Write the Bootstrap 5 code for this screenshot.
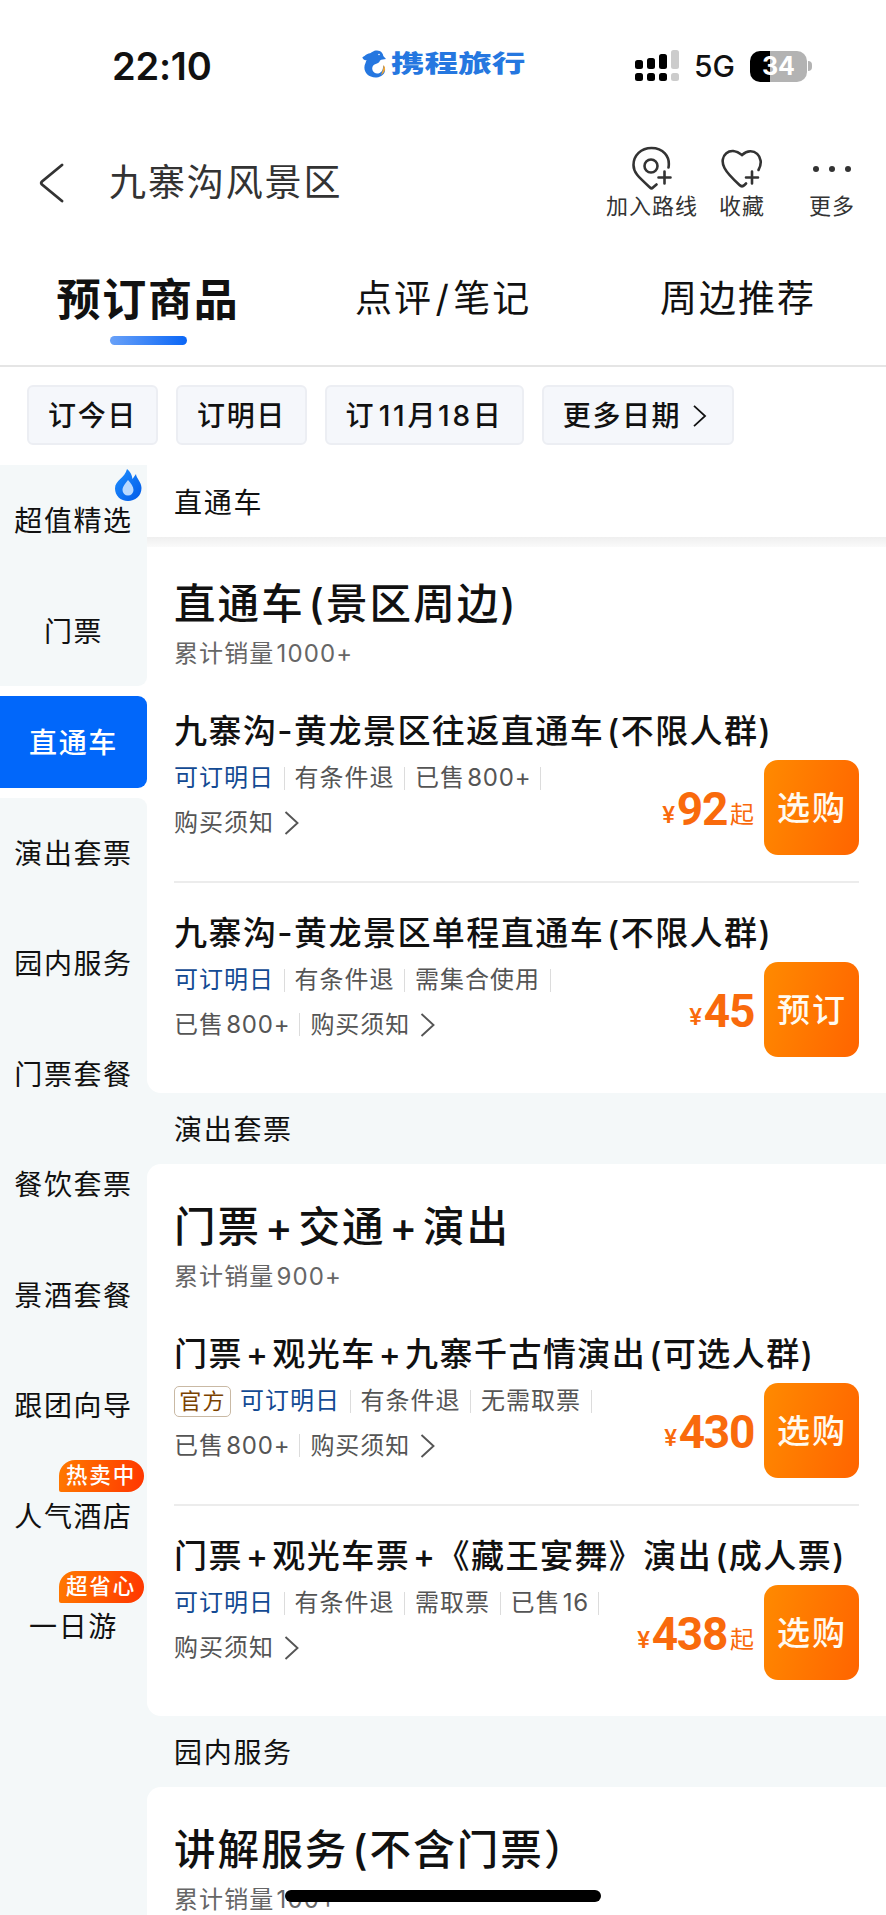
<!DOCTYPE html>
<html lang="zh-CN">
<head>
<meta charset="utf-8">
<meta name="viewport" content="width=device-width, initial-scale=1">
<title>九寨沟风景区</title>
<link href="https://cdn.jsdelivr.net/npm/bootstrap@5.3.0/dist/css/bootstrap.min.css" rel="stylesheet">
<style>
:root{--ink:#111;--soft:#555;--pane:#f4f8f9;--blue:#0167fa}
body{font-family:Inter,"Noto Sans CJK SC",sans-serif;color:var(--ink);background:#fff;line-height:1}
svg{display:block;flex:none}
.lat{margin-left:.09em}
/* status bar */
.status{height:132px;padding:0 74px 0 112px}
.clock{font-size:38px;font-weight:600;width:250px;letter-spacing:-.2px}
.brand{margin-bottom:5px}
.brandword{font-size:24px;font-weight:900;color:#2577e0;transform:scaleX(1.4);transform-origin:0 50%;width:135px;white-space:nowrap}
.net{font-size:30px;font-weight:500;margin:0 15px 0 15px}
.batt{width:57px;height:31px;border-radius:10px;background:linear-gradient(90deg,#000 20px,#b3b3b3 20px);color:#fff;font-weight:700;font-size:25px}
.nub{width:4px;height:10px;border-radius:0 5px 5px 0;background:#b3b3b3;margin-left:1px}
/* title bar */
.topbar{height:101px;padding:0 31px 0 39px;color:#333}
.place{font-size:37px;letter-spacing:1.9px;margin-left:45px}
.tool{font-size:22px;letter-spacing:1px;height:71px;white-space:nowrap;margin-top:-2px}
/* tabs */
.tabs{height:134px;border-bottom:2px solid #e5e5e5;font-size:37px;letter-spacing:2px}
.tabs>div{white-space:nowrap}
.tab-on{font-size:44px;font-weight:700;letter-spacing:1.8px}
.tab-line{width:77px;height:9px;border-radius:5px;background:linear-gradient(90deg,#69a1f8,#0a66f6)}
.slash{margin:0 2.5px}
/* dates */
.dates{height:98px;padding:18px 27px 0;gap:18px}
.chip{height:60px;padding-top:1px;border:2px solid #eceef3;border-radius:6px;background:#f5f7fb;font-size:28px;letter-spacing:1.6px;font-weight:500;white-space:nowrap}
/* sidebar */
.page-body{height:1450px}
.side{width:147px;flex:none;background:var(--pane);font-size:28px;letter-spacing:1.6px}
.side .cell{height:110.5px;background:var(--pane);position:relative;padding-top:2px}
.side .hole{height:111.5px;padding:9.5px 0;background:#fff}
.side .wrap{background:#fff}
.side .on{height:92.5px;padding-top:2px;background:var(--blue);color:#fff;font-weight:500;border-radius:0 9px 9px 0}
.tagpill{position:absolute;right:3.5px;top:-.5px;width:85px;height:32px;border-radius:16px 16px 16px 2px;background:linear-gradient(100deg,#ff7a00,#ff3600);color:#fff;font-size:21.5px;letter-spacing:1.8px;font-weight:500}
.flame{position:absolute;left:114px;top:4px}
/* content */
.main{background:var(--pane)}
.sticky{height:72px;padding:3px 0 0 27px;background:#fff;font-size:28px;letter-spacing:1.7px;position:relative}
.sticky::after{content:"";position:absolute;left:0;right:0;top:72px;height:10px;background:linear-gradient(#efefef,#fafafa);z-index:2}
.block{height:552px;background:#fff;border-radius:14px 0 0 14px;padding:0 27px}
.block.first{height:556px;padding-top:4px;border-top-left-radius:0}
.block h2{font-size:41.5px;letter-spacing:2.1px;font-weight:500;margin:0;height:42px;line-height:42px;white-space:nowrap}
.sum{font-size:24px;letter-spacing:1.1px;color:#666;height:26px;line-height:26px;margin-top:16px}
.hd{height:140px;padding-top:42px}
.item{height:202px;border-bottom:2px solid #ececec;padding-top:33px}
.item:last-child{border:0}
.item h3{font-size:33px;letter-spacing:1.45px;font-weight:500;line-height:34px;height:34px;margin:0;white-space:nowrap}
.low{margin-top:12px;height:95px}
.meta{font-size:24px;letter-spacing:1px;color:var(--soft);padding-top:4.500px}
.meta .lat{letter-spacing:.8px;margin-right:-.5px}
.line1{height:27px;white-space:nowrap}
.line1+.line1{margin-top:17.5px}
.sep{width:1px;height:23px;background:#dcdcdc;margin:0 10px 0 9.5px}
.avail{color:#134a93}
.off{border:1px solid #c9b9a4;border-radius:5px;color:#7a4200;font-size:22px;letter-spacing:1.3px;height:31px;width:57px;margin-right:9px}
.cost{font-family:Roboto,"Noto Sans CJK SC",sans-serif;color:#f96a0c;font-weight:700;font-size:46px;line-height:46px;letter-spacing:-1.3px;margin-right:10px;padding-top:10px;white-space:nowrap}
.cost .yen{font-size:24px;margin-right:3px;font-weight:500;position:relative;top:-2px}
.cost .qi{font-size:24px;font-weight:400;margin-left:3px;position:relative;top:-2px;letter-spacing:0}
.buy{width:95px;height:95px;border-radius:14px;background:linear-gradient(105deg,#ff8a00,#ff6400);color:#fffaf0;font-size:33px;letter-spacing:2px;font-weight:500;padding:1px 0 0 1px}
.band{height:71px;padding:2px 0 0 27px;font-size:28px;letter-spacing:1.7px}
.home{position:absolute;left:285px;top:1890px;width:316px;height:12px;border-radius:6px;background:#000;z-index:5}
</style>
</head>
<body class="position-relative">
<svg width="0" height="0" class="position-absolute"><defs>
<symbol id="chev" viewBox="0 0 16 26"><path d="M1.500 2 13.500 13 1.500 24" fill="none" stroke="currentColor" stroke-width="1.900"/></symbol>
</defs></svg>

<header>
<div class="status d-flex align-items-center">
  <div class="clock">22:10</div>
  <div class="brand d-flex align-items-center">
    <svg width="25" height="28" viewBox="0 0 25 28"><path fill="#2577e0" d="M.3 7.500C3 6 4 4 8 3.300C10 2.600 11 .5 15 .5C19 .5 21 3.500 21.300 6L24 9C22 9.800 19.500 9 18 10.500C17.500 13 15 13.500 12.500 14.500C8.500 17 10 23 15 23.500C19.500 23.500 21.500 19.500 21 15.500C25.500 19 22.500 27 14.500 27.500C5 28 0 20 3.500 13L4.500 10C3 10.500 1 9.500 .3 7.500Z"/><path fill="#f6a52c" d="M21.500 15C24.500 18 23 22.500 19 25C20.500 21 21.500 19 21.500 15Z"/><circle cx="17" cy="4.500" r=".8" fill="#fff"/></svg>
    <div class="brandword ms-1">携程旅行</div>
  </div>
  <div class="ms-auto d-flex align-items-center">
    <svg width="44" height="32" viewBox="0 0 44 32"><g fill="#000"><rect y="10" width="8" height="9" rx="2.500"/><rect x="12" y="8" width="8" height="11" rx="2.500"/><rect x="24" y="4" width="8" height="15" rx="2.500"/><rect y="23" width="8" height="8" rx="2.500"/><rect x="12" y="23" width="8" height="8" rx="2.500"/><rect x="24" y="23" width="8" height="8" rx="2.500"/></g><g fill="#ccc"><rect x="36" width="8" height="19" rx="2.500"/><rect x="36" y="23" width="8" height="8" rx="2.500"/></g></svg>
    <div class="net">5G</div>
    <div class="batt d-flex align-items-center justify-content-center">34</div><div class="nub"></div>
  </div>
</div>

<div class="topbar d-flex align-items-center">
  <svg width="25" height="40" viewBox="0 0 25 40"><path d="M23 2 3 18.500Q1.500 20 3 21.500L23 38" fill="none" stroke="#333" stroke-width="2.800" stroke-linecap="round"/></svg>
  <div class="place">九寨沟风景区</div>
  <div class="ms-auto d-flex">
    <div class="tool d-flex flex-column align-items-center justify-content-between">
      <svg width="40" height="44" viewBox="0 0 40 44" fill="none" stroke="#333" stroke-width="2.600" stroke-linecap="round"><path d="M36.500 21.500C38.500 10 30.500 2 19.500 2C9 2 1.500 9.500 1.500 19C1.500 26.500 6 30.500 18 41.500Q19.500 43 21 41.500L24.500 38.500"/><circle cx="19" cy="20" r="6.500"/><path d="M32.500 25.500V37.500M26.500 31.500H38.500"/></svg>
      <span>加入路线</span></div>
    <div class="tool d-flex flex-column align-items-center justify-content-between" style="margin-left:21px">
      <svg width="42" height="44" viewBox="0 -2 42 44" fill="none" stroke="#333" stroke-width="2.600" stroke-linecap="round"><path d="M37.500 22C45 9 32-3 21 7C9-3-3 8 3.500 20C6 25 12 31 18.500 37Q21 39.500 23.500 37L25 35.500"/><path d="M31 23.500V35.500M25 29.500H37"/></svg>
      <span>收藏</span></div>
    <div class="tool d-flex flex-column align-items-center justify-content-between" style="margin-left:44px">
      <svg width="42" height="44" viewBox="0 0 42 44" fill="#333"><circle cx="5" cy="23" r="3"/><circle cx="21" cy="23" r="3"/><circle cx="37" cy="23" r="3"/></svg>
      <span>更多</span></div>
  </div>
</div>

<nav class="tabs d-flex">
  <div class="tab-on d-flex flex-column align-items-center" style="width:184px;margin-left:56px;padding-top:45px"><span>预订商品</span><div class="tab-line" style="margin-top:14px"></div></div>
  <div style="margin-left:115px;padding-top:47px">点评<span class="slash">/</span>笔记</div>
  <div class="ms-auto" style="margin-right:70px;padding-top:47px">周边推荐</div>
</nav>

<div class="dates d-flex">
  <div class="chip d-flex align-items-center justify-content-center" style="width:131px">订今日</div>
  <div class="chip d-flex align-items-center justify-content-center" style="width:131px">订明日</div>
  <div class="chip d-flex align-items-center justify-content-center" style="width:199px;letter-spacing:2.7px">订<span class="lat">11</span><span>月18</span><span>日</span></div>
  <div class="chip d-flex align-items-center justify-content-center" style="width:192px">更多日期<svg style="margin:0 5px 0 11px" width="16" height="24"><use href="#chev"/></svg></div>
</div>
</header>

<div class="page-body d-flex overflow-hidden">
<aside class="side">
  <div class="cell d-flex align-items-center justify-content-center"><span>超值精选</span>
    <svg class="flame" width="28" height="33" viewBox="0 0 28 33"><defs><linearGradient id="fl" x1="0" y1="0" x2="1" y2="1"><stop offset="0" stop-color="#2090ff"/><stop offset="1" stop-color="#0059e8"/></linearGradient></defs><path fill="url(#fl)" d="M13 0C17 3 18 7 18.500 10L22 5C22 9 27.500 13 27.500 19C27.500 27 21 32 14 32C6.500 32 1 26.500 1 19.500C1 11 11 9 13 0Z"/><path fill="#b9d9ff" d="M14 11C17 14.500 19.500 17.500 19.500 21A5.500 5.500 0 0 1 8.500 21C8.500 17.500 11.500 14.500 14 11Z"/></svg></div>
  <div class="wrap"><div class="cell d-flex align-items-center justify-content-center" style="border-bottom-right-radius:9px"><span>门票</span></div></div>
  <div class="hole"><div class="on d-flex align-items-center justify-content-center">直通车</div></div>
  <div class="wrap"><div class="cell d-flex align-items-center justify-content-center" style="border-top-right-radius:9px"><span>演出套票</span></div></div>
  <div class="cell d-flex align-items-center justify-content-center"><span>园内服务</span></div>
  <div class="cell d-flex align-items-center justify-content-center"><span>门票套餐</span></div>
  <div class="cell d-flex align-items-center justify-content-center"><span>餐饮套票</span></div>
  <div class="cell d-flex align-items-center justify-content-center"><span>景酒套餐</span></div>
  <div class="cell d-flex align-items-center justify-content-center"><span>跟团向导</span></div>
  <div class="cell d-flex align-items-center justify-content-center"><span>人气酒店</span><div class="tagpill d-flex align-items-center justify-content-center">热卖中</div></div>
  <div class="cell d-flex align-items-center justify-content-center"><span>一日游</span><div class="tagpill d-flex align-items-center justify-content-center">超省心</div></div>
</aside>

<main class="main flex-grow-1">
  <div class="sticky d-flex align-items-center">直通车</div>
  <section class="block first">
    <div class="hd"><h2>直通车<span class="lat">(</span>景区周边)</h2><div class="sum">累计销量<span class="lat">1000+</span></div></div>
    <div class="item"><h3>九寨沟-黄龙景区往返直通车<span class="lat">(</span>不限人群)</h3>
      <div class="low d-flex"><div class="meta">
        <div class="line1 d-flex align-items-center"><span class="avail">可订明日</span><i class="sep"></i>有条件退<i class="sep"></i>已售<span class="lat">800+</span><i class="sep"></i></div>
        <div class="line1 d-flex align-items-center">购买须知<svg style="margin-left:10px" width="16" height="26"><use href="#chev"/></svg></div></div>
        <div class="ms-auto d-flex align-items-center"><div class="cost"><span class="yen">¥</span>92<span class="qi">起</span></div><div class="buy d-flex align-items-center justify-content-center">选购</div></div></div></div>
    <div class="item"><h3>九寨沟-黄龙景区单程直通车<span class="lat">(</span>不限人群)</h3>
      <div class="low d-flex"><div class="meta">
        <div class="line1 d-flex align-items-center"><span class="avail">可订明日</span><i class="sep"></i>有条件退<i class="sep"></i>需集合使用<i class="sep"></i></div>
        <div class="line1 d-flex align-items-center">已售<span class="lat">800+</span><i class="sep"></i>购买须知<svg style="margin-left:10px" width="16" height="26"><use href="#chev"/></svg></div></div>
        <div class="ms-auto d-flex align-items-center"><div class="cost"><span class="yen">¥</span>45</div><div class="buy d-flex align-items-center justify-content-center">预订</div></div></div></div>
  </section>
  <div class="band d-flex align-items-center">演出套票</div>
  <section class="block">
    <div class="hd"><h2>门票<span class="lat">+</span><span class="lat">交通</span><span class="lat">+</span><span class="lat">演出</span></h2><div class="sum">累计销量<span class="lat">900+</span></div></div>
    <div class="item"><h3>门票<span class="lat">+</span><span class="lat">观光车</span><span class="lat">+</span><span class="lat">九寨千古情演出</span><span class="lat">(</span>可选人群)</h3>
      <div class="low d-flex"><div class="meta">
        <div class="line1 d-flex align-items-center"><span class="off d-flex align-items-center justify-content-center">官方</span><span class="avail">可订明日</span><i class="sep"></i>有条件退<i class="sep"></i>无需取票<i class="sep"></i></div>
        <div class="line1 d-flex align-items-center">已售<span class="lat">800+</span><i class="sep"></i>购买须知<svg style="margin-left:10px" width="16" height="26"><use href="#chev"/></svg></div></div>
        <div class="ms-auto d-flex align-items-center"><div class="cost"><span class="yen">¥</span>430</div><div class="buy d-flex align-items-center justify-content-center">选购</div></div></div></div>
    <div class="item"><h3>门票<span class="lat">+</span><span class="lat">观光车票</span><span class="lat">+</span>《藏王宴舞》演出<span class="lat">(</span>成人票)</h3>
      <div class="low d-flex"><div class="meta">
        <div class="line1 d-flex align-items-center"><span class="avail">可订明日</span><i class="sep"></i>有条件退<i class="sep"></i>需取票<i class="sep"></i>已售<span class="lat">16</span><i class="sep"></i></div>
        <div class="line1 d-flex align-items-center">购买须知<svg style="margin-left:10px" width="16" height="26"><use href="#chev"/></svg></div></div>
        <div class="ms-auto d-flex align-items-center"><div class="cost"><span class="yen">¥</span>438<span class="qi">起</span></div><div class="buy d-flex align-items-center justify-content-center">选购</div></div></div></div>
  </section>
  <div class="band d-flex align-items-center">园内服务</div>
  <section class="block">
    <div class="hd"><h2>讲解服务<span class="lat">(</span>不含门票）</h2><div class="sum">累计销量<span class="lat">100+</span></div></div>
  </section>
</main>
</div>
<div class="home"></div>
<script src="https://cdn.jsdelivr.net/npm/bootstrap@5.3.0/dist/js/bootstrap.bundle.min.js"></script>
</body>
</html>
